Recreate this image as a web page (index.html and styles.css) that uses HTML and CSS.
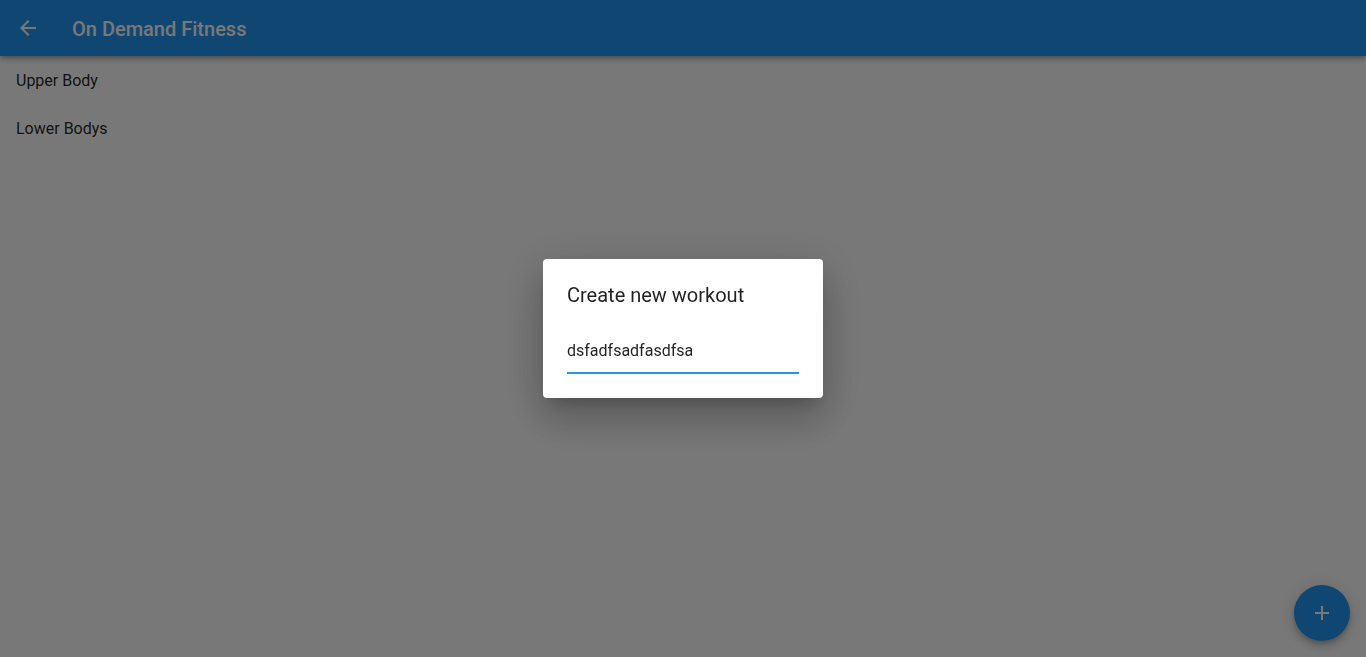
FILE: index.html
```html
<!DOCTYPE html>
<html lang="en">
<head>
<meta charset="utf-8">
<title>On Demand Fitness</title>
<link rel="stylesheet" href="styles.css">
</head>
<body>
  <header class="appbar">
    <button class="icon-btn" aria-label="Back">
      <svg width="24" height="24" viewBox="0 0 24 24"><path fill="currentColor" d="M20 11H7.83l5.59-5.59L12 4l-8 8 8 8 1.41-1.41L7.83 13H20v-2z"/></svg>
    </button>
    <h1 class="title">On Demand Fitness</h1>
  </header>
  <ul class="list">
    <li class="list-item">Upper Body</li>
    <li class="list-item">Lower Bodys</li>
  </ul>
  <button class="fab" aria-label="Add">
    <svg width="24" height="24" viewBox="0 0 24 24"><path fill="currentColor" d="M19 13h-6v6h-2v-6H5v-2h6V5h2v6h6v2z"/></svg>
  </button>
  <div class="backdrop">
    <div class="dialog" role="dialog">
      <h2 class="dialog-title">Create new workout</h2>
      <div class="field">dsfadfsadfasdfsa</div>
    </div>
  </div>
</body>
</html>
```

FILE: styles.css
```css
* { box-sizing: border-box; }
html, body {
  margin: 0;
  padding: 0;
  height: 100%;
}
body {
  background: #ffffff;
  font-family: Roboto, "Liberation Sans", sans-serif;
  color: rgba(0, 0, 0, 0.87);
  overflow: hidden;
}
.appbar {
  height: 56px;
  background: #2196f3;
  color: #ffffff;
  display: flex;
  align-items: center;
  padding: 0 16px;
  box-shadow: 0 2px 4px -1px rgba(0,0,0,0.2), 0 4px 5px 0 rgba(0,0,0,0.14), 0 1px 10px 0 rgba(0,0,0,0.12);
  position: relative;
  z-index: 1;
}
.icon-btn {
  width: 24px;
  height: 24px;
  padding: 0;
  border: 0;
  background: none;
  color: inherit;
  display: flex;
  margin-right: 32px;
}
.title {
  margin: 2px 0 0;
  font-size: 20px;
  font-weight: 500;
  line-height: 32px;
}
.list {
  list-style: none;
  margin: 0;
  padding: 1px 0 0;
}
.list-item {
  height: 48px;
  line-height: 48px;
  padding: 0 16px;
  font-size: 16px;
}
.fab {
  position: fixed;
  right: 16px;
  bottom: 16px;
  width: 56px;
  height: 56px;
  border-radius: 50%;
  border: 0;
  background: #2196f3;
  color: #ffffff;
  display: flex;
  align-items: center;
  justify-content: center;
  padding: 0;
  box-shadow: 0 3px 5px -1px rgba(0,0,0,0.2), 0 6px 10px 0 rgba(0,0,0,0.14), 0 1px 18px 0 rgba(0,0,0,0.12);
}
.backdrop {
  position: fixed;
  inset: 0;
  background: rgba(0, 0, 0, 0.53);
  display: flex;
  align-items: center;
  justify-content: center;
  z-index: 10;
}
.dialog {
  width: 280px;
  background: #ffffff;
  border-radius: 4px;
  padding: 24px;
  box-shadow: 0 11px 15px -7px rgba(0,0,0,0.2), 0 24px 38px 3px rgba(0,0,0,0.14), 0 9px 46px 8px rgba(0,0,0,0.12);
}
.dialog-title {
  margin: 0 0 34px;
  font-size: 20px;
  font-weight: 400;
  line-height: 24px;
  color: rgba(0, 0, 0, 0.87);
}
.field {
  font-size: 16px;
  line-height: 20px;
  padding-bottom: 11px;
  border-bottom: 2px solid #2196f3;
  color: rgba(0, 0, 0, 0.87);
}
```
